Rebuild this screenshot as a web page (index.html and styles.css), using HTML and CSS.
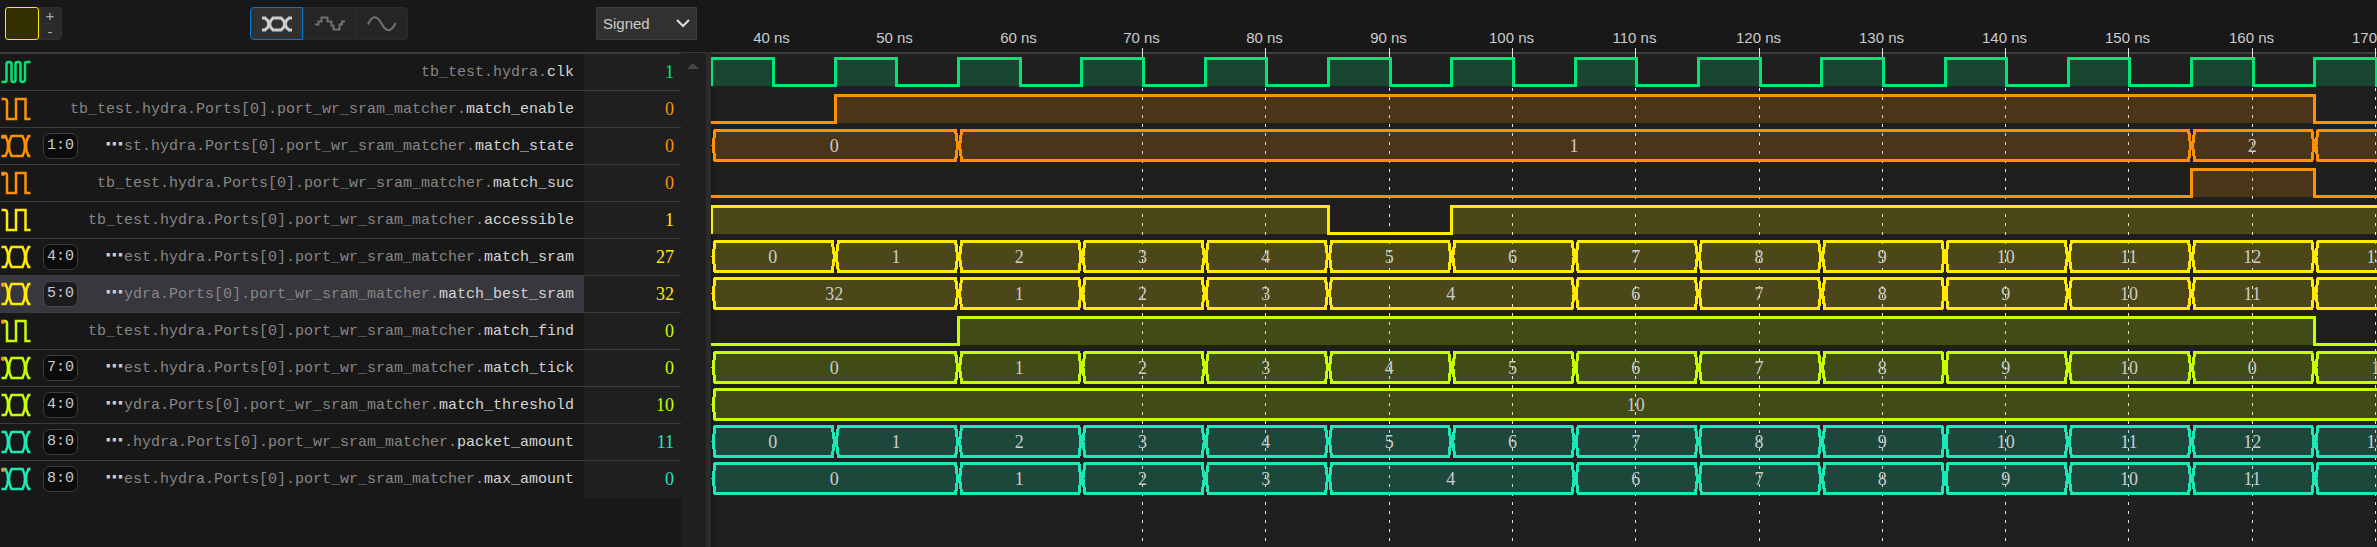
FILE: index.html
```html
<!DOCTYPE html>
<html lang="en">
<head>
<meta charset="utf-8">
<title>Waveform viewer</title>
<link rel="stylesheet" href="styles.css">
</head>
<body>
<svg class="defs" width="0" height="0" aria-hidden="true">
  <symbol id="icon-clock" viewBox="0 0 30 24">
    <path d="M1 22H4Q6 22 6 20V4Q6 2 8 2H9Q11 2 11 4V20Q11 22 13 22T15 20V4Q15 2 17 2H18Q20 2 20 4V20Q20 22 22 22T24.500 20V4Q24.500 2 26.500 2H30"/>
  </symbol>
  <symbol id="icon-bit" viewBox="0 0 30 24">
    <path d="M1 2H4Q6.500 2 6.500 4.500V22H15.500V2H25V22H30"/>
  </symbol>
  <symbol id="icon-bus" viewBox="0 0 30 24">
    <path d="M1 2H5L7 7Q8 12 7 17L5 22H1"/>
    <path d="M11 2H22L24 7Q25 12 24 17L22 22H11L9 17Q8 12 9 7Z"/>
    <path d="M30 2H28L26 7Q25 12 26 17L28 22H30"/>
  </symbol>
</svg>

<main class="viewer">
  <section class="signals">
    <header class="toolbar">
      <div class="swatch-group">
        <button class="swatch" aria-label="Signal colour"></button>
        <div class="stepper">
          <button class="step" aria-label="Taller rows">+</button>
          <button class="step" aria-label="Shorter rows">-</button>
        </div>
      </div>
      <div class="formats">
        <button class="format format-active" aria-label="Digital">
          <svg class="format-icon" viewBox="0 0 32 18"><g stroke-width="3"><path d="M1 3H4L7 6Q8.500 9 7 12L4 15H1"/><path d="M12 3H20L23 6Q24 9 23 12L20 15H12L9.500 12Q8 9 9.500 6Z"/><path d="M31 3H28L25 6Q24 9 25 12L28 15H31"/></g></svg>
        </button>
        <button class="format" aria-label="Stepped analog">
          <svg class="format-icon" viewBox="0 0 32 18"><path d="M1 9.500H4.500V6.500H7.500V2.500H13.500V6.500H17.500V10.500H19.500V14.500H25.500V9.500H28V6.500H31"/></svg>
        </button>
        <button class="format" aria-label="Smooth analog">
          <svg class="format-icon" viewBox="0 0 32 18"><path d="M2 9.500C6 0 11 0 15.500 8.500S25 18 29.500 8"/></svg>
        </button>
      </div>
      <div class="radix">
        <select class="radix-select" aria-label="Number format"><option>Signed</option><option>Unsigned</option></select>
        <svg class="radix-arrow" viewBox="0 0 14 9"><path d="M1 1L7 7L13 1"/></svg>
      </div>
    </header>
    <div class="signal-body">
      <ul class="names">
        <li class="row green"><svg class="icon"><use href="#icon-clock"/></svg><span class="name">tb_test.hydra.<b>clk</b></span></li>
        <li class="row orange"><svg class="icon"><use href="#icon-bit"/></svg><span class="name">tb_test.hydra.Ports[0].port_wr_sram_matcher.<b>match_enable</b></span></li>
        <li class="row orange marked"><svg class="icon"><use href="#icon-bus"/></svg><span class="badge">1:0</span><span class="name"><i>⋯</i>st.hydra.Ports[0].port_wr_sram_matcher.<b>match_state</b></span></li>
        <li class="row orange marked"><svg class="icon"><use href="#icon-bit"/></svg><span class="name">tb_test.hydra.Ports[0].port_wr_sram_matcher.<b>match_suc</b></span></li>
        <li class="row yellow"><svg class="icon"><use href="#icon-bit"/></svg><span class="name">tb_test.hydra.Ports[0].port_wr_sram_matcher.<b>accessible</b></span></li>
        <li class="row yellow"><svg class="icon"><use href="#icon-bus"/></svg><span class="badge">4:0</span><span class="name"><i>⋯</i>est.hydra.Ports[0].port_wr_sram_matcher.<b>match_sram</b></span></li>
        <li class="row yellow marked selected"><svg class="icon"><use href="#icon-bus"/></svg><span class="badge">5:0</span><span class="name"><i>⋯</i>ydra.Ports[0].port_wr_sram_matcher.<b>match_best_sram</b></span></li>
        <li class="row lime marked"><svg class="icon"><use href="#icon-bit"/></svg><span class="name">tb_test.hydra.Ports[0].port_wr_sram_matcher.<b>match_find</b></span></li>
        <li class="row lime marked"><svg class="icon"><use href="#icon-bus"/></svg><span class="badge">7:0</span><span class="name"><i>⋯</i>est.hydra.Ports[0].port_wr_sram_matcher.<b>match_tick</b></span></li>
        <li class="row lime"><svg class="icon"><use href="#icon-bus"/></svg><span class="badge">4:0</span><span class="name"><i>⋯</i>ydra.Ports[0].port_wr_sram_matcher.<b>match_threshold</b></span></li>
        <li class="row teal"><svg class="icon"><use href="#icon-bus"/></svg><span class="badge">8:0</span><span class="name"><i>⋯</i>.hydra.Ports[0].port_wr_sram_matcher.<b>packet_amount</b></span></li>
        <li class="row teal marked"><svg class="icon"><use href="#icon-bus"/></svg><span class="badge">8:0</span><span class="name"><i>⋯</i>est.hydra.Ports[0].port_wr_sram_matcher.<b>max_amount</b></span></li>
      </ul>
      <ul class="values">
        <li class="row value green">1</li>
        <li class="row value orange">0</li>
        <li class="row value orange">0</li>
        <li class="row value orange">0</li>
        <li class="row value yellow">1</li>
        <li class="row value yellow">27</li>
        <li class="row value yellow">32</li>
        <li class="row value lime">0</li>
        <li class="row value lime">0</li>
        <li class="row value lime">10</li>
        <li class="row value teal">11</li>
        <li class="row value teal">0</li>
      </ul>
      <div class="scroll"><svg class="scroll-arrow" viewBox="0 0 12 6"><path d="M0 6L6 0L12 6Z"/></svg></div>
    </div>
  </section>
  <section class="waves">
    <div class="axis"></div>
    <div class="plot"></div>
    <svg class="chart" id="chart" role="img" aria-label="Waveforms"></svg>
  </section>
</main>
<script src="waves.js"></script>
</body>
</html>
```
FILE: styles.css
```css
* { box-sizing: border-box; }

body {
  margin: 0;
  background: #1f1f1f;
  color: #cccccc;
  font-family: "Liberation Sans", Arial, sans-serif;
  font-size: 15px;
}

ul { margin: 0; padding: 0; list-style: none; }
button { padding: 0; font: inherit; color: inherit; }
svg { display: block; }
.defs { position: absolute; }

.green { color: #00e676; }
.orange { color: #ff9100; }
.yellow { color: #ffea00; }
.lime { color: #c6ff00; }
.teal { color: #1de9b6; }

.viewer {
  display: grid;
  grid-template-columns: 711px minmax(0, 1fr);
  min-height: 100vh;
  overflow: hidden;
}

.signals { display: flex; flex-direction: column; }

/* Toolbar */
.toolbar {
  display: flex;
  justify-content: space-between;
  height: 52px;
  padding: 7px 14px 12px 5px;
  background: #181818;
}
.swatch-group { display: flex; }
.swatch {
  width: 34px;
  border: 1px solid #ffea00;
  border-radius: 3px;
  background: #332f00;
}
.stepper {
  display: grid;
  grid-template-rows: 1fr 1fr;
  width: 23px;
  border: 1px solid #313131;
  border-left: 0;
  border-radius: 0 4px 4px 0;
  overflow: hidden;
}
.step {
  border: 0;
  background: #2a2a2a;
  color: #aaaaaa;
  line-height: 15px;
}
.step + .step { border-top: 1px solid #323232; }

.formats { display: flex; }
.format {
  display: grid;
  place-items: center;
  width: 53px;
  border: 1px solid #2b2b2b;
  background: #252525;
  color: #707070;
}
.format:first-child { border-radius: 4px 0 0 4px; }
.format:last-child { width: 52px; border-radius: 0 4px 4px 0; }
.format-active {
  border-color: #0078d4;
  background: #313131;
  color: #cccccc;
}
.format-icon { width: 32px; height: 18px; }
.format-icon path { fill: none; stroke: currentColor; }
.format-icon > path { stroke-width: 2; }

.radix { position: relative; display: flex; }
.radix-select {
  width: 101px;
  padding: 0 6px;
  appearance: none;
  border: 1px solid #3c3c3c;
  border-radius: 0;
  background: #313131;
  color: #cccccc;
  font: inherit;
}
.radix-arrow {
  position: absolute;
  right: 7px;
  top: 12px;
  width: 14px;
  height: 9px;
  fill: none;
  stroke: #dddddd;
  stroke-width: 2;
  pointer-events: none;
}

/* Signal list */
.signal-body {
  display: grid;
  grid-template-columns: minmax(0, 1fr) 97px 25px;
  flex: 1;
  border-right: 5px solid #2b2b2b;
}
.names, .values {
  border-top: 2px solid #3c3c3c;
  background: #181818;
}
.scroll {
  border-top: 1px solid #3c3c3c;
  padding: 10px 6px;
}
.scroll-arrow { width: 12px; height: 6px; fill: #454545; }

.row {
  position: relative;
  display: flex;
  align-items: center;
  height: 37px;
  border-bottom: 1px solid #3c3c3c;
}
.row:last-child { border-bottom-color: transparent; }
.names .row { padding-right: 10px; }
.selected { background: #37373d; }
.marked::before {
  content: "";
  position: absolute;
  left: 1px;
  top: 7px;
  width: 4px;
  height: 4px;
  border-radius: 2px;
  background: #f88f22;
}
.icon {
  flex: none;
  width: 31px;
  height: 24px;
  fill: none;
  stroke: currentColor;
  stroke-width: 2.5;
}
.badge {
  width: 35px;
  height: 26px;
  margin-left: 12px;
  border: 1px solid #3c3c3c;
  border-radius: 7px;
  background: #0c0c0c;
  color: #cccccc;
  font: 15px/24px "Liberation Mono", monospace;
  text-align: center;
}
.selected .badge { background: #1b1b1e; border-color: #47474c; }
.name {
  flex: 1;
  padding-top: 2px;
  color: #868686;
  font: 15px/34px "Liberation Mono", monospace;
  text-align: right;
  white-space: nowrap;
}
.name b { color: #d4d4d4; font-weight: 400; }
.name i {
  margin-right: 1px;
  color: #cccccc;
  font: 700 18px/20px "DejaVu Sans", sans-serif;
}
.value {
  justify-content: flex-end;
  padding-right: 7px;
  background: #1f1f1f;
  font: 18px/36px "Liberation Serif", serif;
}

/* Waveforms */
.waves {
  position: relative;
  display: flex;
  flex-direction: column;
  overflow: hidden;
}
.axis {
  height: 54px;
  border-bottom: 2px solid #3c3c3c;
  background: #181818;
}
.plot {
  flex: 1;
  background: linear-gradient(90deg, #181818, #1f1f1f 6px);
}
.chart {
  position: absolute;
  inset: 0;
  width: 100%;
  height: 100%;
}
.tick { stroke: #e8e8e8; shape-rendering: crispEdges; }
.gridline { stroke: #e8e8e8; stroke-dasharray: 3 6; shape-rendering: crispEdges; }
.tick-label {
  fill: #cccccc;
  font: 15px "Liberation Sans", Arial, sans-serif;
  text-anchor: middle;
}
.wave-fill { fill: currentColor; fill-opacity: 0.2; shape-rendering: crispEdges; }
.wave-line { fill: none; stroke: currentColor; stroke-width: 3; shape-rendering: crispEdges; }
.wave-text {
  fill: #cccccc;
  font: 18px "Liberation Serif", serif;
  text-anchor: middle;
}
```
FILE: waves.js
```js
const START = 35, END = 185, SCALE = 12.33;
const TOP = 54, ROW = 37;
const SVG = "http://www.w3.org/2000/svg";
const chart = document.getElementById("chart");

const xOf = (t) => (t - START) * SCALE;

function add(parent, tag, attrs, text) {
  const el = document.createElementNS(SVG, tag);
  for (const key in attrs) el.setAttribute(key, attrs[key]);
  if (text !== undefined) el.textContent = text;
  parent.appendChild(el);
  return el;
}

// Each entry of a bus or bit signal is [start time, value].
const counter = Array.from({ length: 14 }, (_, i) => [35 + i * 10, String(i)]).concat([[175, ""]]);
const best = (first) => [[35, first], [55, "1"], [65, "2"], [75, "3"], [85, "4"], [105, "6"],
  [115, "7"], [125, "8"], [135, "9"], [145, "10"], [155, "11"], [165, ""]];
const signals = [
  { color: "green", bits: Array.from({ length: 30 }, (_, i) => [35 + i * 5, 1 - (i % 2)]) },
  { color: "orange", bits: [[35, 0], [45, 1], [165, 0]] },
  { color: "orange", bus: [[35, "0"], [55, "1"], [155, "2"], [165, ""]] },
  { color: "orange", bits: [[35, 0], [155, 1], [165, 0]] },
  { color: "yellow", bits: [[35, 1], [85, 0], [95, 1]] },
  { color: "yellow", bus: counter },
  { color: "yellow", bus: best("32") },
  { color: "lime", bits: [[35, 0], [55, 1], [165, 0]] },
  { color: "lime", bus: [[35, "0"], [55, "1"], [65, "2"], [75, "3"], [85, "4"], [95, "5"], [105, "6"],
    [115, "7"], [125, "8"], [135, "9"], [145, "10"], [155, "0"], [165, "1"], [175, ""]] },
  { color: "lime", bus: [[35, "10"]] },
  { color: "teal", bus: counter },
  { color: "teal", bus: best("0") },
];

const bottom = TOP + ROW * signals.length + 43;
for (let t = 40; xOf(t) < chart.clientWidth && t < END; t += 10) {
  const x = Math.floor(xOf(t)) + 0.5;
  add(chart, "text", { class: "tick-label", x: x - 1, y: 43 }, t + " ns");
  if (t >= 70) {
    add(chart, "line", { class: "tick", x1: x, x2: x, y1: 48, y2: 58 });
    add(chart, "line", { class: "gridline", x1: x, x2: x, y1: 61, y2: bottom });
  }
}

function drawBits(g, bits) {
  const hi = 4.5, lo = 31.5;
  let line = "";
  bits.forEach(([t, v], i) => {
    const x0 = xOf(t) + 1, x1 = xOf(i + 1 < bits.length ? bits[i + 1][0] : END) + 1;
    const y = v ? hi : lo;
    if (v) add(g, "rect", { class: "wave-fill", x: x0, y: hi, width: x1 - x0, height: 27 });
    line += i ? `V${y}H${x1}` : v ? `M${x0 - 1} ${lo}V${y}H${x1}` : `M0 ${y}H${x1}`;
  });
  add(g, "path", { class: "wave-line", d: line });
}

function drawBus(g, bus) {
  bus.forEach(([t, label], i) => {
    const a = xOf(t), b = xOf(i + 1 < bus.length ? bus[i + 1][0] : END);
    const d = `M${a + 2} 17.5L${a + 4} 2.5H${b - 2}L${b} 17.5L${b - 2} 32.5H${a + 4}Z`;
    add(g, "path", { class: "wave-fill", d });
    add(g, "path", { class: "wave-line", d });
    if (label) add(g, "text", { class: "wave-text", x: (a + b) / 2, y: 24 }, label);
  });
}

signals.forEach((s, i) => {
  const g = add(chart, "g", { class: s.color, transform: `translate(0 ${TOP + ROW * i})` });
  if (s.bits) drawBits(g, s.bits);
  else drawBus(g, s.bus);
});
```
